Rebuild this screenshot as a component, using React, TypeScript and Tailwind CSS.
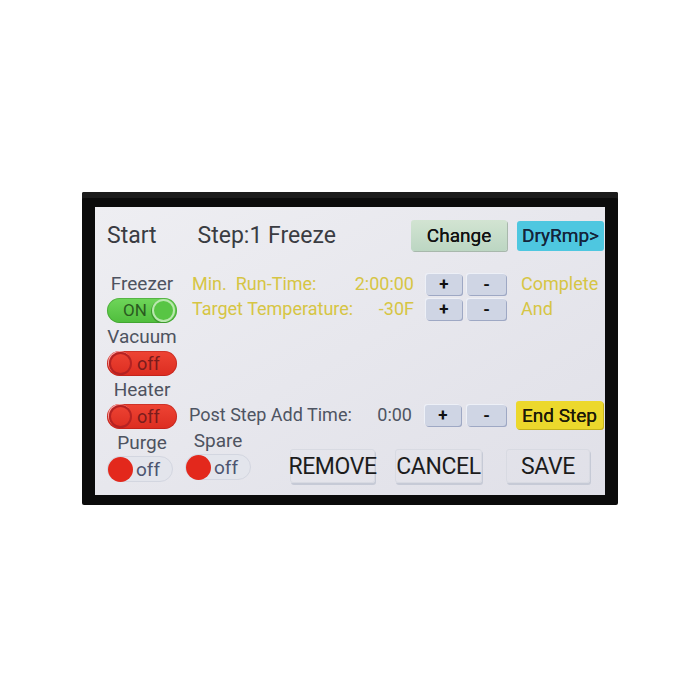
import React from 'react';

const font = { fontFamily: 'Roboto, "Noto Sans", sans-serif' };

// red/green slide toggle used by the left column
const SlideToggle = ({ on }: { on: boolean }) => {
  if (on) {
    return (
      <div className="relative flex h-[25px] w-[70px] items-center rounded-full bg-gradient-to-b from-[#6fd65a] to-[#4fbd3c] pl-[16px] shadow-[inset_0_0_0_1px_rgba(40,120,30,0.35)]">
        <span className="text-[17px] leading-none text-[#2a5a20]">ON</span>
        <span className="absolute right-[2px] top-[1px] h-[23px] w-[23px] rounded-full border-2 border-[#b9e8ae] bg-[#58c544] shadow-[-1px_1px_0_#3e9a2e]" />
      </div>
    );
  }
  return (
    <div className="relative flex h-[25px] w-[70px] items-center rounded-full bg-gradient-to-b from-[#ee4434] to-[#dc2c20] pl-[30px] shadow-[inset_0_0_0_1px_rgba(150,20,20,0.35)]">
      <span className="absolute left-[2px] top-[1px] h-[23px] w-[23px] rounded-full border-2 border-[#b52222] shadow-[-1px_-1px_0_#f4a0a0]" />
      <span className="text-[18px] leading-none text-[#7a1c1c]">off</span>
    </div>
  );
};

// grey pill with a solid red dot (Purge / Spare)
const DotToggle = () => (
  <div className="flex h-[26px] w-[66px] items-center rounded-full border border-[#d3d6e0] bg-[#e3e5ec]">
    <span className="h-[25px] w-[25px] rounded-full bg-[#e3281c]" />
    <span className="ml-[3px] text-[19px] leading-none text-[#4c5470]">off</span>
  </div>
);

const StepBtn = ({ label, w }: { label: string; w: string }) => (
  <div
    className={`flex h-[21px] ${w} items-center justify-center rounded-[3px] bg-[#cfd5e4] text-[17px] font-bold leading-none text-[#111] shadow-[1px_1px_0_#9ea8c4,-1px_-1px_0_#edf0f7]`}
  >
    {label}
  </div>
);

const Labelled = ({ label, children }: { label: string; children: React.ReactNode }) => (
  <div className="flex flex-col items-start">
    <div className="h-[20px] w-[70px] whitespace-nowrap text-center text-[19px] leading-[20px] text-[#4e5360]">
      {label}
    </div>
    <div className="mt-[4px]">{children}</div>
  </div>
);

const BigBtn = ({ label, w }: { label: string; w: string }) => (
  <div
    className={`flex h-[34px] ${w} items-center justify-center rounded-[3px] border border-[#d8dae2] text-[23px] leading-none tracking-[-0.4px] text-[#1c1c1c] shadow-[1px_2px_0_#c6cad6]`}
  >
    {label}
  </div>
);

export default function App() {
  return (
    <div className="min-h-[700px] w-[700px] bg-white pl-[82px] pt-[192px]" style={font}>
      <div className="h-[313px] w-[536px] rounded-[2px] bg-[#0b0b0b] pl-[13px] pt-[15px] shadow-[inset_0_6px_0_#1c1c1c]">
        <div className="h-[288px] w-[510px] bg-gradient-to-br from-[#eeeef2] via-[#e7e7ed] to-[#e0e0e8]">
          {/* header */}
          <div className="flex h-[44px] items-end">
            <div className="flex h-[31px] w-full items-center">
              <span className="ml-[12px] text-[23px] leading-none text-[#3a3c42]">Start</span>
              <span className="ml-[41px] text-[23px] leading-none text-[#3a3c42]">Step:1 Freeze</span>
              <div className="ml-auto flex h-[31px] w-[96px] items-center justify-center rounded-[3px] bg-gradient-to-b from-[#d2e4d2] to-[#bcd6c2] text-[19px] leading-none text-[#111] shadow-[1px_1px_0_#a8b8ac] [text-shadow:0_0_0.4px_#111]">
                Change
              </div>
              <div className="ml-[10px] mr-[1px] flex h-[30px] w-[87px] items-center justify-center rounded-[3px] bg-[#4ec7e0] text-[19px] leading-none text-[#14243a] [text-shadow:0_0_0.4px_#14243a]">
                DryRmp&gt;
              </div>
            </div>
          </div>

          {/* body */}
          <div className="mt-[23px] flex">
            {/* left column */}
            <div className="flex w-[91px] flex-col gap-[4px] pl-[12px]">
              <Labelled label="Freezer">
                <SlideToggle on />
              </Labelled>
              <Labelled label="Vacuum">
                <SlideToggle on={false} />
              </Labelled>
              <Labelled label="Heater">
                <SlideToggle on={false} />
              </Labelled>
              <div className="flex h-[20px] w-[70px] justify-center text-[19px] leading-[20px] text-[#4e5360]">
                Purge
              </div>
              <div className="-mt-[1px]">
                <DotToggle />
              </div>
            </div>

            {/* main area */}
            <div className="flex flex-1 flex-col">
              <div className="flex h-[20px] items-center pl-[6px] text-[18px] leading-none text-[#d6c544]">
                <span className="w-[150px] whitespace-pre">Min.  Run-Time:</span>
                <span className="w-[72px] text-right">2:00:00</span>
                <div className="ml-[12px]">
                  <StepBtn label="+" w="w-[36px]" />
                </div>
                <div className="ml-[5px]">
                  <StepBtn label="-" w="w-[39px]" />
                </div>
                <span className="ml-[15px]">Complete</span>
              </div>
              <div className="mt-[5px] flex h-[20px] items-center pl-[6px] text-[18px] leading-none text-[#d6c544]">
                <span className="w-[150px] whitespace-nowrap">Target Temperature:</span>
                <span className="w-[72px] text-right">-30F</span>
                <div className="ml-[12px]">
                  <StepBtn label="+" w="w-[36px]" />
                </div>
                <div className="ml-[5px]">
                  <StepBtn label="-" w="w-[39px]" />
                </div>
                <span className="ml-[15px]">And</span>
              </div>

              <div className="mt-[82px] flex h-[28px] items-center pl-[3px] text-[18px] leading-none text-[#4e5462]">
                <span className="w-[165px] whitespace-nowrap">Post Step Add Time:</span>
                <span className="w-[58px] text-right">0:00</span>
                <div className="ml-[13px]">
                  <StepBtn label="+" w="w-[36px]" />
                </div>
                <div className="ml-[6px]">
                  <StepBtn label="-" w="w-[39px]" />
                </div>
                <div className="ml-[10px] flex h-[28px] w-[87px] items-center justify-center rounded-[3px] bg-[#ecd82c] text-[19px] leading-none text-[#1c1a08] shadow-[1px_1px_0_#c4b21c] [text-shadow:0_0_0.4px_#1c1a08]">
                  End Step
                </div>
              </div>

              <div className="mt-[2px] flex">
                <div className="flex w-[64px] flex-col items-center">
                  <div className="h-[20px] text-[19px] leading-[20px] text-[#4e5360]">Spare</div>
                  <div className="mt-[3px]">
                    <DotToggle />
                  </div>
                </div>
                <div className="ml-[40px] mt-[18px] flex">
                  <BigBtn label="REMOVE" w="w-[85px]" />
                  <div className="ml-[20px]">
                    <BigBtn label="CANCEL" w="w-[87px]" />
                  </div>
                  <div className="ml-[24px]">
                    <BigBtn label="SAVE" w="w-[84px]" />
                  </div>
                </div>
              </div>
            </div>
          </div>
        </div>
      </div>
    </div>
  );
}
